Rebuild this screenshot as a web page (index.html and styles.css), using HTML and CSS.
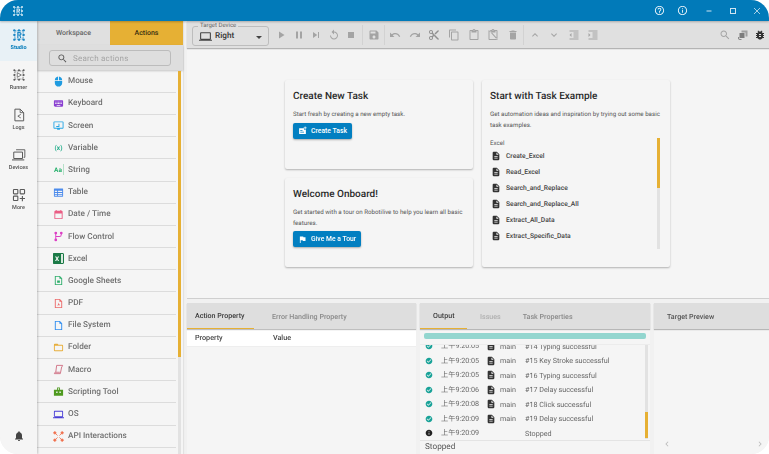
FILE: index.html
```html
<!DOCTYPE html>
<html lang="en">
<head>
<meta charset="utf-8">
<title>Robotilive Studio</title>
<link rel="stylesheet" href="styles.css">
</head>
<body>
<svg class="sprite" width="0" height="0" aria-hidden="true">
  <symbol id="i-play" viewBox="0 0 24 24"><path d="M8 5v14l11-7z"/></symbol>
  <symbol id="i-pause" viewBox="0 0 24 24"><path d="M6 19h4V5H6v14zm8-14v14h4V5h-4z"/></symbol>
  <symbol id="i-next" viewBox="0 0 24 24"><path d="M6 18l8.5-6L6 6v12zM16 6v12h2V6h-2z"/></symbol>
  <symbol id="i-replay" viewBox="0 0 24 24"><path d="M12 5V1L7 6l5 5V7c3.31 0 6 2.69 6 6s-2.69 6-6 6-6-2.69-6-6H4c0 4.42 3.58 8 8 8s8-3.58 8-8-3.58-8-8-8z"/></symbol>
  <symbol id="i-stop" viewBox="0 0 24 24"><path d="M6 6h12v12H6z"/></symbol>
  <symbol id="i-save" viewBox="0 0 24 24"><path d="M17 3H5c-1.11 0-2 .9-2 2v14c0 1.1.89 2 2 2h14c1.1 0 2-.9 2-2V7l-4-4zm-5 16c-1.66 0-3-1.34-3-3s1.34-3 3-3 3 1.34 3 3-1.34 3-3 3zm3-10H5V5h10v4z"/></symbol>
  <symbol id="i-undo" viewBox="0 0 24 24"><path d="M12.5 8c-2.65 0-5.05.99-6.9 2.6L2 7v9h9l-3.62-3.62c1.39-1.16 3.16-1.88 5.12-1.88 3.54 0 6.55 2.31 7.6 5.5l2.37-.78C21.08 11.03 17.15 8 12.5 8z"/></symbol>
  <symbol id="i-redo" viewBox="0 0 24 24"><path d="M18.4 10.6C16.55 8.99 14.15 8 11.5 8c-4.65 0-8.58 3.03-9.96 7.22L3.9 16c1.05-3.19 4.05-5.5 7.6-5.5 1.95 0 3.73.72 5.12 1.88L13 16h9V7l-3.6 3.6z"/></symbol>
  <symbol id="i-cut" viewBox="0 0 24 24"><path d="M9.64 7.64c.23-.5.36-1.05.36-1.64 0-2.21-1.79-4-4-4S2 3.79 2 6s1.79 4 4 4c.59 0 1.14-.13 1.64-.36L10 12l-2.36 2.36C7.14 14.13 6.59 14 6 14c-2.21 0-4 1.79-4 4s1.79 4 4 4 4-1.79 4-4c0-.59-.13-1.14-.36-1.64L12 14l7 7h3v-1L9.64 7.64zM6 8c-1.1 0-2-.89-2-2s.9-2 2-2 2 .89 2 2-.9 2-2 2zm0 12c-1.1 0-2-.89-2-2s.9-2 2-2 2 .89 2 2-.9 2-2 2zm6-7.5c-.28 0-.5-.22-.5-.5s.22-.5.5-.5.5.22.5.5-.22.5-.5.5zM19 3l-6 6 2 2 7-7V3z"/></symbol>
  <symbol id="i-copy" viewBox="0 0 24 24"><path d="M16 1H4c-1.1 0-2 .9-2 2v14h2V3h12V1zm3 4H8c-1.1 0-2 .9-2 2v14c0 1.1.9 2 2 2h11c1.1 0 2-.9 2-2V7c0-1.1-.9-2-2-2zm0 16H8V7h11v14z"/></symbol>
  <symbol id="i-paste" viewBox="0 0 24 24"><path d="M19 2h-4.18C14.4.84 13.3 0 12 0c-1.3 0-2.4.84-2.82 2H5c-1.1 0-2 .9-2 2v16c0 1.1.9 2 2 2h14c1.1 0 2-.9 2-2V4c0-1.1-.9-2-2-2zm-7 0c.55 0 1 .45 1 1s-.45 1-1 1-1-.45-1-1 .45-1 1-1zm7 18H5V4h2v3h10V4h2v16z"/></symbol>
  <symbol id="i-paste-off" viewBox="0 0 24 24"><path d="M19 2h-4.18C14.4.84 13.3 0 12 0c-1.3 0-2.4.84-2.82 2H5c-1.1 0-2 .9-2 2v16c0 1.1.9 2 2 2h14c1.1 0 2-.9 2-2V4c0-1.1-.9-2-2-2zm-7 0c.55 0 1 .45 1 1s-.45 1-1 1-1-.45-1-1 .45-1 1-1zm7 18H5V4h2v3h10V4h2v16zM4 3.4L5.4 2 22 20.6 20.6 22z"/></symbol>
  <symbol id="i-delete" viewBox="0 0 24 24"><path d="M6 19c0 1.1.9 2 2 2h8c1.1 0 2-.9 2-2V7H6v12zM19 4h-3.5l-1-1h-5l-1 1H5v2h14V4z"/></symbol>
  <symbol id="i-up" viewBox="0 0 24 24"><path d="M12 8l-6 6 1.41 1.41L12 10.83l4.59 4.58L18 14z"/></symbol>
  <symbol id="i-down" viewBox="0 0 24 24"><path d="M16.59 8.59L12 13.17 7.41 8.59 6 10l6 6 6-6z"/></symbol>
  <symbol id="i-outdent" viewBox="0 0 24 24"><path d="M11 17h10v-2H11v2zm-8-5l4 4V8l-4 4zm0 9h18v-2H3v2zM3 3v2h18V3H3zm8 6h10V7H11v2zm0 4h10v-2H11v2z"/></symbol>
  <symbol id="i-indent" viewBox="0 0 24 24"><path d="M3 21h18v-2H3v2zM3 8v8l4-4-4-4zm8 9h10v-2H11v2zM3 3v2h18V3H3zm8 6h10V7H11v2zm0 4h10v-2H11v2z"/></symbol>
  <symbol id="i-search" viewBox="0 0 24 24"><path d="M15.5 14h-.79l-.28-.27C15.41 12.59 16 11.11 16 9.5 16 5.91 13.09 3 9.5 3S3 5.91 3 9.5 5.91 16 9.5 16c1.61 0 3.09-.59 4.23-1.57l.27.28v.79l5 4.99L20.49 19l-4.99-5zm-6 0C7.01 14 5 11.99 5 9.5S7.01 5 9.5 5 14 7.01 14 9.5 11.99 14 9.5 14z"/></symbol>
  <symbol id="i-bug" viewBox="0 0 24 24"><path d="M20 8h-2.81c-.45-.78-1.07-1.45-1.82-1.96L17 4.41 15.59 3l-2.17 2.17C12.96 5.06 12.49 5 12 5c-.49 0-.96.06-1.41.17L8.41 3 7 4.41l1.62 1.63C7.88 6.55 7.26 7.22 6.81 8H4v2h2.09c-.05.33-.09.66-.09 1v1H4v2h2v1c0 .34.04.67.09 1H4v2h2.81c1.04 1.79 2.97 3 5.19 3s4.15-1.21 5.19-3H20v-2h-2.09c.05-.33.09-.66.09-1v-1h2v-2h-2v-1c0-.34-.04-.67-.09-1H20V8zm-6 8h-4v-2h4v2zm0-4h-4v-2h4v2z"/></symbol>
  <symbol id="i-preview" viewBox="0 0 24 24"><path d="M9 3h12v12h-4V7H9z" opacity=".6"/><path d="M5 8h10v10H5z" opacity=".95"/><path d="M2 16h2v3l2 1h3v2H5l-3-2z" opacity=".8"/></symbol>
  <symbol id="i-bell" viewBox="0 0 24 24"><path d="M12 22c1.1 0 2-.9 2-2h-4c0 1.1.89 2 2 2zm6-6v-5c0-3.07-1.64-5.64-4.5-6.32V4c0-.83-.67-1.5-1.5-1.5s-1.5.67-1.5 1.5v.68C7.63 5.36 6 7.92 6 11v5l-2 2v1h16v-1l-2-2z"/></symbol>
  <symbol id="i-check" viewBox="0 0 24 24"><path d="M12 2C6.48 2 2 6.48 2 12s4.48 10 10 10 10-4.48 10-10S17.52 2 12 2zm-2 15l-5-5 1.41-1.41L10 14.17l7.59-7.59L19 8l-9 9z"/></symbol>
  <symbol id="i-info" viewBox="0 0 24 24"><path d="M12 2C6.48 2 2 6.48 2 12s4.48 10 10 10 10-4.48 10-10S17.52 2 12 2zm1 15h-2v-6h2v6zm0-8h-2V7h2v2z"/></symbol>
  <symbol id="i-doc" viewBox="0 0 24 24"><path d="M14 2H6c-1.1 0-1.99.9-1.99 2L4 20c0 1.1.89 2 1.99 2H18c1.1 0 2-.9 2-2V8l-6-6zm2 16H8v-2h8v2zm0-4H8v-2h8v2zm-3-5V3.5L18.5 9H13z"/></symbol>
  <symbol id="i-help-o" viewBox="0 0 24 24"><path d="M11 18h2v-2h-2v2zm1-16C6.48 2 2 6.48 2 12s4.48 10 10 10 10-4.48 10-10S17.52 2 12 2zm0 18c-4.41 0-8-3.59-8-8s3.59-8 8-8 8 3.59 8 8-3.59 8-8 8zm0-14c-2.21 0-4 1.79-4 4h2c0-1.1.9-2 2-2s2 .9 2 2c0 2-3 1.75-3 5h2c0-2.25 3-2.5 3-5 0-2.21-1.79-4-4-4z"/></symbol>
  <symbol id="i-info-o" viewBox="0 0 24 24"><path d="M11 17h2v-6h-2v6zm1-15C6.48 2 2 6.48 2 12s4.48 10 10 10 10-4.48 10-10S17.52 2 12 2zm0 18c-4.41 0-8-3.59-8-8s3.59-8 8-8 8 3.59 8 8-3.59 8-8 8zM11 9h2V7h-2v2z"/></symbol>
  <symbol id="i-laptop" viewBox="0 0 24 24"><path d="M20 18c1.1 0 1.99-.9 1.99-2L22 6c0-1.1-.9-2-2-2H4c-1.1 0-2 .9-2 2v10c0 1.1.9 2 2 2H0v2h24v-2h-4zM4 6h16v10H4V6z"/></symbol>
  <symbol id="i-flag" viewBox="0 0 24 24"><path d="M14.4 6L14 4H5v17h2v-7h5.6l.4 2h7V6z"/></symbol>
  <symbol id="i-newtask" viewBox="0 0 24 24"><path d="M3 6h13v4h5v11H3zM6 11v2h6v-2zm0 4v2h10v-2z"/><path d="M18 1h2v3h3v2h-3v3h-2V6h-3V4h3z"/></symbol>
  <symbol id="i-frame-r" viewBox="0 0 24 24"><path d="M5 5h14v14H5z" fill="none" stroke="currentColor" stroke-width="1.4" stroke-dasharray="2.6 1.4"/><circle cx="4" cy="4" r="2"/><circle cx="12" cy="4" r="2"/><circle cx="20" cy="4" r="2"/><circle cx="4" cy="12" r="2"/><circle cx="20" cy="12" r="2"/><circle cx="4" cy="20" r="2"/><circle cx="12" cy="20" r="2"/><circle cx="20" cy="20" r="2"/><path d="M9 7h4.5a3 3 0 0 1 1 5.8L16 17h-2l-1.400-4H11v4H9zm2 2v2h2.300a1 1 0 0 0 0-2z"/></symbol>
  <symbol id="i-frame-p" viewBox="0 0 24 24"><path d="M5 5h14v14H5z" fill="none" stroke="currentColor" stroke-width="1.3" stroke-dasharray="2.6 1.4"/><circle cx="4" cy="4" r="1.7"/><circle cx="12" cy="4" r="1.7"/><circle cx="20" cy="4" r="1.7"/><circle cx="4" cy="12" r="1.7"/><circle cx="20" cy="12" r="1.7"/><circle cx="4" cy="20" r="1.7"/><circle cx="12" cy="20" r="1.7"/><circle cx="20" cy="20" r="1.7"/><path d="M9 8l7 4-7 4z" fill="none" stroke="currentColor" stroke-width="1.3"/></symbol>
  <symbol id="i-logs" viewBox="0 0 24 24"><path d="M5 2h9l6 6v14H5z" fill="none" stroke="currentColor" stroke-width="1.7"/><path d="M14 2v6h6" fill="none" stroke="currentColor" stroke-width="1.5"/><path d="M15 11l-5 3 5 3" fill="none" stroke="currentColor" stroke-width="1.5"/></symbol>
  <symbol id="i-devices" viewBox="0 0 24 24"><path d="M7 3h15v13h-2" fill="none" stroke="currentColor" stroke-width="1.6"/><path d="M3 7h15v11H3z" fill="none" stroke="currentColor" stroke-width="1.7"/><path d="M0 19.500h21v1.800H0z"/></symbol>
  <symbol id="i-more" viewBox="0 0 24 24"><g fill="none" stroke="currentColor" stroke-width="1.9"><rect x="2.5" y="2.5" width="7.5" height="7.5" rx="1"/><rect x="14" y="2.5" width="7.5" height="7.5" rx="1"/><rect x="2.5" y="14" width="7.500" height="7.500" rx="1"/><path d="M17.8 13.5v9M13.3 18h9"/></g></symbol>
</svg>

<div class="app">
  <header class="titlebar">
    <svg class="logo"><use href="#i-frame-r"/></svg>
    <div class="titlebar-actions">
      <svg class="tb-ic"><use href="#i-help-o"/></svg>
      <svg class="tb-ic"><use href="#i-info-o"/></svg>
      <svg class="win-ic" viewBox="0 0 10 10"><path d="M2.500 5h5" stroke="currentColor" stroke-width="1"/></svg>
      <svg class="win-ic" viewBox="0 0 10 10"><rect x="2.500" y="2.500" width="5" height="5" fill="none" stroke="currentColor" stroke-width="1"/></svg>
      <svg class="win-ic" viewBox="0 0 10 10"><path d="M2 2l6 6M8 2l-6 6" stroke="currentColor" stroke-width=".8"/></svg>
    </div>
  </header>
  <div class="body">
    <nav class="rail">
      <a class="rail-item active"><svg><use href="#i-frame-r"/></svg><span>Studio</span></a>
      <a class="rail-item"><svg><use href="#i-frame-p"/></svg><span>Runner</span></a>
      <a class="rail-item"><svg><use href="#i-logs"/></svg><span>Logs</span></a>
      <a class="rail-item"><svg><use href="#i-devices"/></svg><span>Devices</span></a>
      <a class="rail-item"><svg><use href="#i-more"/></svg><span>More</span></a>
      <svg class="bell"><use href="#i-bell"/></svg>
    </nav>
    <aside class="side">
      <div class="side-tabs">
        <div class="side-tab">Workspace</div>
        <div class="side-tab on">Actions</div>
      </div>
      <div class="search-row">
        <div class="search"><svg><use href="#i-search"/></svg><span>Search actions</span></div>
      </div>
      <div class="list-wrap">
        <ul class="actions">
          <li><svg viewBox="0 0 24 24" fill="#1f9be0"><path d="M13 1.070V9h7c0-4.080-3.050-7.440-7-7.930zM4 15c0 4.420 3.580 8 8 8s8-3.580 8-8v-4H4v4zm7-13.930C7.050 1.560 4 4.920 4 9h7V1.070z"/></svg>Mouse</li>
          <li><svg viewBox="0 0 24 24" fill="#8a3fd1"><path d="M20 5H4c-1.100 0-1.990.9-1.990 2L2 17c0 1.100.9 2 2 2h16c1.100 0 2-.9 2-2V7c0-1.100-.9-2-2-2zm-9 3h2v2h-2V8zm0 3h2v2h-2v-2zM8 8h2v2H8V8zm0 3h2v2H8v-2zm-1 2H5v-2h2v2zm0-3H5V8h2v2zm9 7H8v-2h8v2zm0-4h-2v-2h2v2zm0-3h-2V8h2v2zm3 3h-2v-2h2v2zm0-3h-2V8h2v2z"/></svg>Keyboard</li>
          <li><svg viewBox="0 0 24 24" fill="#27a6e5"><path d="M21 3H3a2 2 0 0 0-2 2v12a2 2 0 0 0 2 2h6v2h6v-2h6a2 2 0 0 0 2-2V5a2 2 0 0 0-2-2zm0 14H3V5h18z"/><path d="M12 8v5H7v2h7V8z"/></svg>Screen</li>
          <li><span class="glyph var">(x)</span>Variable</li>
          <li><span class="glyph str">Aa</span>String</li>
          <li><svg viewBox="0 0 24 24" fill="#4c8bec"><path d="M3 3h18a1 1 0 0 1 1 1v16a1 1 0 0 1-1 1H3a1 1 0 0 1-1-1V4a1 1 0 0 1 1-1zm1 5v3h5V8zm7 0v3h9V8zm-7 5v2h5v-2zm7 0v2h9v-2zm-7 4v2h5v-2zm7 0v2h9v-2z"/></svg>Table</li>
          <li><svg viewBox="0 0 24 24" fill="#ea5d84"><path d="M19 4h-1V2h-2v2H8V2H6v2H5a2 2 0 0 0-2 2v14a2 2 0 0 0 2 2h14a2 2 0 0 0 2-2V6a2 2 0 0 0-2-2zm0 16H5V10h14z"/></svg>Date / Time</li>
          <li><svg viewBox="0 0 24 24" fill="#dc3fc4"><circle cx="6" cy="4.500" r="3"/><circle cx="18" cy="4.500" r="3"/><circle cx="6" cy="19.500" r="3"/><path d="M5 5h2v15H5z"/><path d="M17 5h2v3a5 5 0 0 1-5 5H6v-2h8a3 3 0 0 0 3-3z"/></svg>Flow Control</li>
          <li><span class="glyph xl">X</span>Excel</li>
          <li><svg viewBox="0 0 24 24" fill="#2fae6c"><path d="M6 2h9l5 5v15H4V2zm0 2v16h12V8h-4V4z"/><path d="M9 12h6v5H9z"/></svg>Google Sheets</li>
          <li><svg viewBox="0 0 24 24" fill="#ec6a6a"><path d="M6 2h9l5 5v15H4V2zm0 2v16h12V8h-4V4z"/><path d="M8 17c3-1 4-5 4-7 1 3 2 5 4 6-3 0-5 0-8 1z"/></svg>PDF</li>
          <li><svg viewBox="0 0 24 24" fill="#2d8cf0"><path d="M6 2h9l5 5v15H4V2zm0 2v16h12V8h-4V4z"/></svg>File System</li>
          <li><svg viewBox="0 0 24 24" fill="#e7ae3c"><path d="M10 4l2 2h8a2 2 0 0 1 2 2v10a2 2 0 0 1-2 2H4a2 2 0 0 1-2-2V6a2 2 0 0 1 2-2zM4 8v10h16V8z"/></svg>Folder</li>
          <li><svg viewBox="0 0 24 24" fill="none" stroke="#cf6f82" stroke-width="2"><path d="M8 3h13c0 2-1 3-2 3l-3 15H3c0-2 1-3 3-3h9"/><path d="M8 3L6 18"/></svg>Macro</li>
          <li><svg viewBox="0 0 24 24" fill="#4f9a1f"><path d="M9 3h6v5h7v13H2V8h7zm2 2v3h2V5zM7 12v3h3v-3zm7 0v3h3v-3z"/></svg>Scripting Tool</li>
          <li><svg viewBox="0 0 24 24" fill="#4a3fd6"><path d="M20 18c1.100 0 1.990-.9 1.990-2L22 6c0-1.100-.9-2-2-2H4c-1.100 0-2 .9-2 2v10c0 1.100.9 2 2 2H0v2h24v-2h-4zM4 6h16v10H4V6z"/></svg>OS</li>
          <li><svg viewBox="0 0 24 24" fill="#f07250" stroke="#f07250" stroke-width="1.800"><circle cx="4" cy="4" r="2.500"/><circle cx="20" cy="4" r="2.500"/><circle cx="4" cy="20" r="2.500"/><circle cx="20" cy="20" r="2.500"/><path d="M4 4l6 6M20 4l-6 6M4 20l6-6M20 20l-6-6"/></svg>API Interactions</li>
          <li></li>
        </ul>
        <div class="list-scroll"><div class="list-thumb"></div></div>
      </div>
    </aside>
    <main class="main">
      <div class="toolbar">
        <div class="device">
          <span class="device-label">Target Device</span>
          <svg class="dev-ic"><use href="#i-laptop"/></svg>
          <span class="dev-val">Right</span>
          <span class="dev-arrow"></span>
        </div>
        <div class="tools tight">
          <svg><use href="#i-play"/></svg><svg><use href="#i-pause"/></svg><svg><use href="#i-next"/></svg><svg><use href="#i-replay"/></svg><svg><use href="#i-stop"/></svg>
        </div>
        <i class="sep"></i>
        <div class="tools"><svg><use href="#i-save"/></svg></div>
        <i class="sep"></i>
        <div class="tools">
          <svg><use href="#i-undo"/></svg><svg><use href="#i-redo"/></svg><svg class="dk"><use href="#i-cut"/></svg><svg><use href="#i-copy"/></svg><svg><use href="#i-paste"/></svg><svg><use href="#i-paste-off"/></svg><svg><use href="#i-delete"/></svg>
        </div>
        <i class="sep"></i>
        <div class="tools">
          <svg><use href="#i-up"/></svg><svg><use href="#i-down"/></svg><svg><use href="#i-outdent"/></svg><svg><use href="#i-indent"/></svg>
        </div>
        <div class="tools right">
          <svg><use href="#i-search"/></svg><svg class="mid"><use href="#i-preview"/></svg><svg class="blk"><use href="#i-bug"/></svg>
        </div>
      </div>
      <section class="canvas">
        <div class="cards">
          <div class="card card-a">
            <h2>Create New Task</h2>
            <p>Start fresh by creating a new empty task.</p>
            <button class="btn"><svg><use href="#i-newtask"/></svg>Create Task</button>
          </div>
          <div class="card card-b">
            <h2>Start with Task Example</h2>
            <p>Get automation ideas and inspiration by trying out some basic task examples.</p>
            <div class="examples">
              <div class="ex-list">
                <div class="ex-group">Excel</div>
                <div class="ex"><svg><use href="#i-doc"/></svg>Create_Excel</div>
                <div class="ex"><svg><use href="#i-doc"/></svg>Read_Excel</div>
                <div class="ex"><svg><use href="#i-doc"/></svg>Search_and_Replace</div>
                <div class="ex"><svg><use href="#i-doc"/></svg>Search_and_Replace_All</div>
                <div class="ex"><svg><use href="#i-doc"/></svg>Extract_All_Data</div>
                <div class="ex"><svg><use href="#i-doc"/></svg>Extract_Specific_Data</div>
                <div class="ex-group web">Web</div>
              </div>
              <div class="ex-scroll"><div class="ex-thumb"></div></div>
            </div>
          </div>
          <div class="card card-c">
            <h2>Welcome Onboard!</h2>
            <p>Get started with a tour on Robotilive to help you learn all basic features.</p>
            <button class="btn"><svg><use href="#i-flag"/></svg>Give Me a Tour</button>
          </div>
        </div>
      </section>
      <section class="panels">
        <div class="panel p-prop">
          <div class="ptabs">
            <div class="ptab on w-prop">Action Property</div>
            <div class="ptab">Error Handling Property</div>
          </div>
          <div class="prop-head"><span class="col-a">Property</span><span>Value</span></div>
        </div>
        <div class="panel p-out">
          <div class="ptabs">
            <div class="ptab on w-out">Output</div>
            <div class="ptab faint">Issues</div>
            <div class="ptab">Task Properties</div>
          </div>
          <div class="progress"><div></div></div>
          <div class="log-wrap">
            <div class="log">
              <div class="row"><svg class="ok"><use href="#i-check"/></svg><span class="t">上午9:20:05</span><svg class="d"><use href="#i-doc"/></svg><span class="m">main</span><span>#14 Typing successful</span></div>
              <div class="row"><svg class="ok"><use href="#i-check"/></svg><span class="t">上午9:20:05</span><svg class="d"><use href="#i-doc"/></svg><span class="m">main</span><span>#15 Key Stroke successful</span></div>
              <div class="row"><svg class="ok"><use href="#i-check"/></svg><span class="t">上午9:20:05</span><svg class="d"><use href="#i-doc"/></svg><span class="m">main</span><span>#16 Typing successful</span></div>
              <div class="row"><svg class="ok"><use href="#i-check"/></svg><span class="t">上午9:20:06</span><svg class="d"><use href="#i-doc"/></svg><span class="m">main</span><span>#17 Delay successful</span></div>
              <div class="row"><svg class="ok"><use href="#i-check"/></svg><span class="t">上午9:20:08</span><svg class="d"><use href="#i-doc"/></svg><span class="m">main</span><span>#18 Click successful</span></div>
              <div class="row"><svg class="ok"><use href="#i-check"/></svg><span class="t">上午9:20:09</span><svg class="d"><use href="#i-doc"/></svg><span class="m">main</span><span>#19 Delay successful</span></div>
              <div class="row"><svg class="inf"><use href="#i-info"/></svg><span class="t">上午9:20:09</span><i class="d"></i><i class="m"></i><span>Stopped</span></div>
            </div>
            <div class="log-scroll"><div class="log-thumb"></div></div>
          </div>
          <div class="status">Stopped</div>
        </div>
        <div class="panel p-prev">
          <div class="ptabs"><div class="ptab title">Target Preview</div></div>
          <div class="prev-body">
            <svg viewBox="0 0 24 24"><path d="M15.410 7.410L14 6l-6 6 6 6 1.410-1.410L10.830 12z"/></svg>
            <svg viewBox="0 0 24 24"><path d="M10 6L8.590 7.410 13.170 12l-4.580 4.590L10 18l6-6z"/></svg>
          </div>
        </div>
      </section>
    </main>
  </div>
</div>
</body>
</html>
```

FILE: styles.css
```css
* { box-sizing: border-box; }
html, body { margin: 0; padding: 0; height: 100%; background: #fff; overflow: hidden; }
body { font-family: Roboto, "Noto Sans CJK SC", sans-serif; color: #333; text-rendering: geometricPrecision; }
.sprite { display: block; }
svg { display: block; }
svg:not([fill]) { fill: currentColor; }

.app { width: 769px; height: 454px; border-radius: 18px; overflow: hidden; display: flex; flex-direction: column; background: #f1f1f1; filter: blur(.3px); }

.titlebar { height: 21px; flex: none; background: #017ab9; color: #fff; display: flex; align-items: center; padding-left: 12px; box-shadow: 0 1px 2px rgba(0,0,0,.25); z-index: 3; }
.logo { width: 12px; height: 12px; color: #d9ecf6; }
.titlebar-actions { margin-left: auto; display: flex; align-items: center; padding-right: 7px; }
.tb-ic { width: 11px; height: 11px; margin-right: 12px; color: #e8f3fa; }
.tb-ic + .tb-ic { margin-right: 16px; }
.win-ic { width: 10px; height: 10px; margin-left: 14px; color: #cfe4f1; }
.tb-ic + .win-ic { margin-left: 0; }

.body { flex: 1; display: flex; min-height: 0; }

.rail { width: 37px; flex: none; background: #f5f5f5; display: flex; flex-direction: column; position: relative; box-shadow: 1px 0 2px rgba(0,0,0,.2); z-index: 2; }
.rail-item { height: 40px; flex: none; display: flex; flex-direction: column; align-items: center; padding-top: 7px; color: #555; font-size: 5.500px; font-weight: 500; }
.rail-item svg { width: 14px; height: 14px; margin-bottom: 3px; color: #5a5a5a; }
.rail-item span { line-height: 7px; }
.rail-item.active { background: #e8f1f6; color: #017ab9; font-weight: 700; }
.rail-item.active svg { color: #1b86c4; }
.bell { position: absolute; left: 13px; bottom: 12px; width: 12px; height: 12px; color: #444; }

.side { width: 146px; flex: none; background: #f5f5f5; display: flex; flex-direction: column; margin-right: 4px; box-shadow: 1px 0 1px rgba(0,0,0,.06); }
.side-tabs { display: flex; height: 24px; flex: none; }
.side-tab { flex: 1; display: flex; align-items: center; justify-content: center; font-size: 7px; font-weight: 500; color: #666; background: #e0e0e0; }
.side-tab.on { background: #e6b034; color: #3a2f10; }
.search-row { height: 25px; flex: none; background: #dedede; padding: 5px 12px 4px; box-shadow: 0 1px 2px rgba(0,0,0,.2); }
.search { height: 16px; border: 1px solid #bcbcbc; border-radius: 3px; display: flex; align-items: center; padding-left: 7px; font-size: 8px; color: #a5a5a5; letter-spacing: .2px; }
.search svg { width: 11px; height: 11px; color: #555; margin-right: 5px; }

.list-wrap { flex: 1; display: flex; min-height: 0; overflow: hidden; padding-top: .6px; }
.actions { width: 139px; flex: none; list-style: none; margin: 0; padding: 0; }
.actions li { height: 22.200px; border-bottom: 1px solid #dcdcdc; display: flex; align-items: center; padding-left: 16px; font-size: 8.200px; font-weight: 500; color: #707070; }
.actions svg { width: 11px; height: 11px; margin-right: 4px; flex: none; }
.glyph { width: 11px; height: 11px; margin-right: 4px; flex: none; display: flex; align-items: center; justify-content: center; font-size: 6.500px; font-weight: 700; white-space: nowrap; }
.glyph.var { color: #26ae8c; }
.glyph.str { color: #25b06b; border-right: 1px solid #b5e0c8; }
.glyph.xl { background: #1c7a47; color: #fff; border-radius: 1px; border-right: 3px solid #d9eadf; outline: 1px solid #1c7a47; outline-offset: -1px; }
.list-scroll { width: 3px; margin-left: 2px; background: #e2e2e2; }
.list-thumb { height: 286px; background: #e6b034; }

.main { flex: 1; min-width: 0; display: flex; flex-direction: column; }

.toolbar { height: 27px; flex: none; background: #e0e0e0; display: flex; align-items: center; padding-left: 5px; box-shadow: 0 1px 1px rgba(0,0,0,.25); position: relative; z-index: 1; }
.device { width: 77px; height: 20px; margin-top: 3px; border: 1px solid #bdbdbd; border-radius: 3px; display: flex; align-items: center; padding-left: 6px; position: relative; flex: none; }
.device-label { position: absolute; left: 5px; top: -5px; padding: 0 2px; background: #e0e0e0; font-size: 6px; line-height: 8px; color: #666; }
.dev-ic { width: 13px; height: 13px; color: #444; margin-right: 3px; }
.dev-val { font-size: 8.200px; font-weight: 500; color: #333; }
.dev-arrow { position: absolute; right: 6px; top: 9px; border: 3px solid transparent; border-top: 3px solid #444; border-bottom: 0; }
.tools { display: flex; align-items: center; gap: 7.600px; color: #a4a4a4; margin-left: 4.200px; margin-right: 4.500px; }
.tools svg { width: 12px; height: 12px; flex: none; }
.tools.tight { gap: 5.600px; margin-left: 6px; margin-right: 5px; }
.tools .dk { color: #8f8f8f; }
.tools.right { margin-left: auto; margin-right: 3px; gap: 5.500px; }
.tools .mid { color: #777; }
.tools .blk { color: #333; }
.sep { width: 1px; height: 20px; background: #d2d2d2; flex: none; }

.canvas { flex: 1; min-height: 0; margin-top: 2px; background: #f5f5f5; padding: 30px 0 0 98px; border-bottom: 1px solid #cfcfcf; }
.cards { display: grid; grid-template-columns: 188px 188px; grid-template-rows: 89px 89px; gap: 9px; }
.card { background: #f5f5f5; border-radius: 2px; padding: 10px 8px 0; box-shadow: 0 1px 2px rgba(0,0,0,.28); }
.card-b { grid-column: 2; grid-row: 1 / 3; }
.card-c { grid-column: 1; grid-row: 2; }
.card h2 { margin: 0 0 6px; font-size: 10px; line-height: 13px; font-weight: 500; color: #2a2a2a; }
.card p { margin: 0 0 3px; font-size: 6.200px; line-height: 10.500px; color: #555; }
.btn { height: 16px; padding: 0 5px; border: 0; border-radius: 2px; background: #027fc1; color: #fff; font-family: inherit; font-size: 6.800px; font-weight: 500; display: flex; align-items: center; box-shadow: 0 1px 2px rgba(0,0,0,.3); }
.btn svg { width: 9px; height: 9px; margin-right: 4px; }

.examples { display: flex; height: 111px; overflow: hidden; margin-top: 8px; }
.ex-list { flex: 1; min-width: 0; }
.ex-group { font-size: 6.200px; line-height: 10px; color: #555; }
.ex-group.web { margin-top: 5px; }
.ex { height: 16px; display: flex; align-items: center; font-size: 6.700px; font-weight: 500; color: #444; padding-left: 1px; }
.ex svg { width: 10px; height: 10px; margin-right: 5px; color: #333; }
.ex-scroll { width: 3px; background: #e2e2e2; flex: none; margin: 0 2px 0 0; }
.ex-thumb { height: 50px; background: #e6b034; }

.panels { height: 151px; flex: none; margin-top: 4px; display: flex; gap: 4px; }
.panel { background: #f5f5f5; display: flex; flex-direction: column; min-width: 0; }
.p-prop { width: 229px; flex: none; }
.p-out { width: 230px; flex: none; }
.p-prev { flex: 1; }
.ptabs { height: 26px; flex: none; background: #dedede; display: flex; box-shadow: 0 1px 1px rgba(0,0,0,.25); position: relative; }
.ptab { display: flex; align-items: center; height: 26px; padding: 0 13px; font-size: 7.100px; font-weight: 500; color: #8a8a8a; white-space: nowrap; }
.ptab.on { color: #3b3b3b; border-bottom: 1px solid #e6b034; }
.ptab.w-prop { padding: 0 8px; width: 67px; margin-right: 5px; }
.ptab.w-out { width: 47px; }
.ptab.faint { color: #b0b0b0; padding: 0 9px 0 13px; }
.ptab.title { color: #555; }
.prop-head { height: 18px; background: #fff; display: flex; align-items: center; padding-left: 8px; font-size: 7.200px; font-weight: 500; color: #444; border-bottom: 1px solid #eee; }
.col-a { width: 78px; }
.progress { height: 6px; margin: 4px 4px 0; background: #93d6cf; border-radius: 2px; flex: none; }
.log-wrap { height: 95px; flex: none; margin-top: 5px; border-top: 1px solid #ececec; display: flex; overflow: hidden; padding-right: 2px; }
.log { flex: 1; min-width: 0; margin-top: -6px; }
.row { height: 14.500px; display: flex; align-items: center; font-size: 7.200px; color: #666; padding-left: 5px; white-space: nowrap; }
.row .ok { width: 8px; height: 8px; color: #18a298; flex: none; margin-right: 8px; }
.row .inf { width: 8px; height: 8px; color: #222; flex: none; margin-right: 8px; }
.row .t { width: 44px; flex: none; }
.row .d { width: 10px; height: 10px; color: #333; flex: none; margin: 0 4px 0 1px; display: block; }
.row .m { width: 25px; flex: none; }
.log-scroll { width: 3px; flex: none; background: #e2e2e2; }
.log-thumb { height: 26px; margin-top: 67px; background: #e6b034; }
.status { flex: 1; border-top: 1px solid #e4e4e4; padding-left: 5px; font-size: 8.200px; line-height: 13px; color: #555; margin-top: 1px; }
.prev-body { flex: 1; display: flex; justify-content: space-between; align-items: flex-end; padding: 0 4px 5px 8px; color: #bbb; }
.prev-body svg { width: 10px; height: 10px; }
```
